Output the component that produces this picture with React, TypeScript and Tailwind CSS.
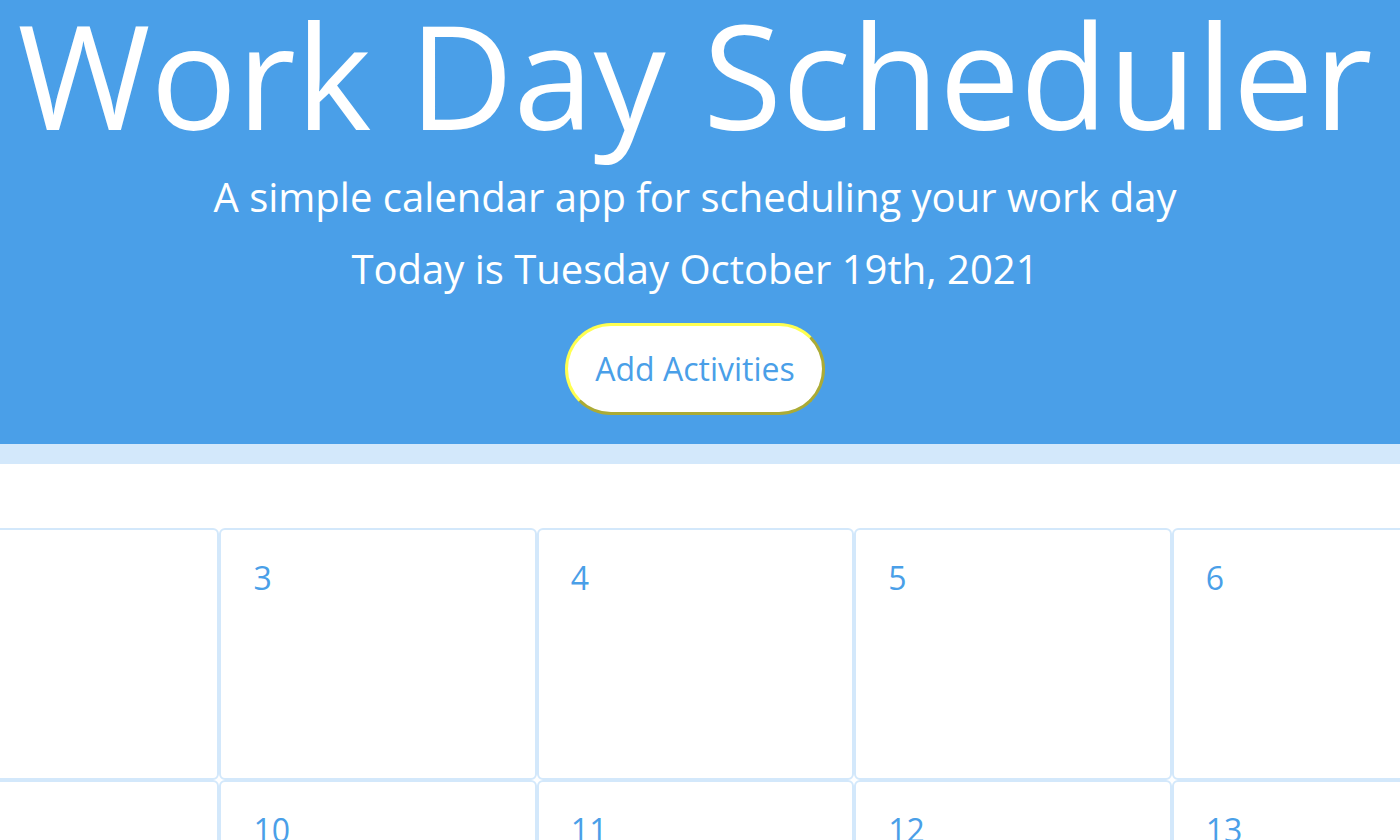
const weeks = [
  [2, 3, 4, 5, 6, 7, 8],
  [9, 10, 11, 12, 13, 14, 15],
];

export default function App() {
  return (
    <div className="min-h-screen bg-white font-['Open_Sans',sans-serif] overflow-hidden">
      <header className="bg-[#4a9fe8] text-white text-center pb-[29px] pr-[10px]">
        <h1 className="text-[144px] leading-none pt-[2px] whitespace-nowrap">Work Day Scheduler</h1>
        <p className="text-[40px] leading-[48px] mt-[27px]">A simple calendar app for scheduling your work day</p>
        <p className="text-[40px] leading-[48px] mt-[24px]">Today is Tuesday October 19th, 2021</p>
        <button
          type="button"
          className="mt-[30px] bg-white text-[#4a9fe8] text-[32px] leading-[48px] px-[27px] py-[19px] rounded-full border-[3px] border-[#ffff50] [border-style:outset]"
        >
          Add Activities
        </button>
      </header>
      <div className="h-[20px] bg-[#d3e8fb]" />

      <div className="mt-[64px] overflow-hidden">
        <div className="w-[2222px] -ml-[98px] grid grid-cols-7">
          {weeks.flat().map((day) => (
            <div key={day} className="h-[252px] border-2 border-[#d3e8fb] rounded-md pt-[24px] px-[32px]">
              <span className="text-[32px] leading-[48px] text-[#4a9fe8]">{day}</span>
            </div>
          ))}
        </div>
      </div>
    </div>
  );
}
